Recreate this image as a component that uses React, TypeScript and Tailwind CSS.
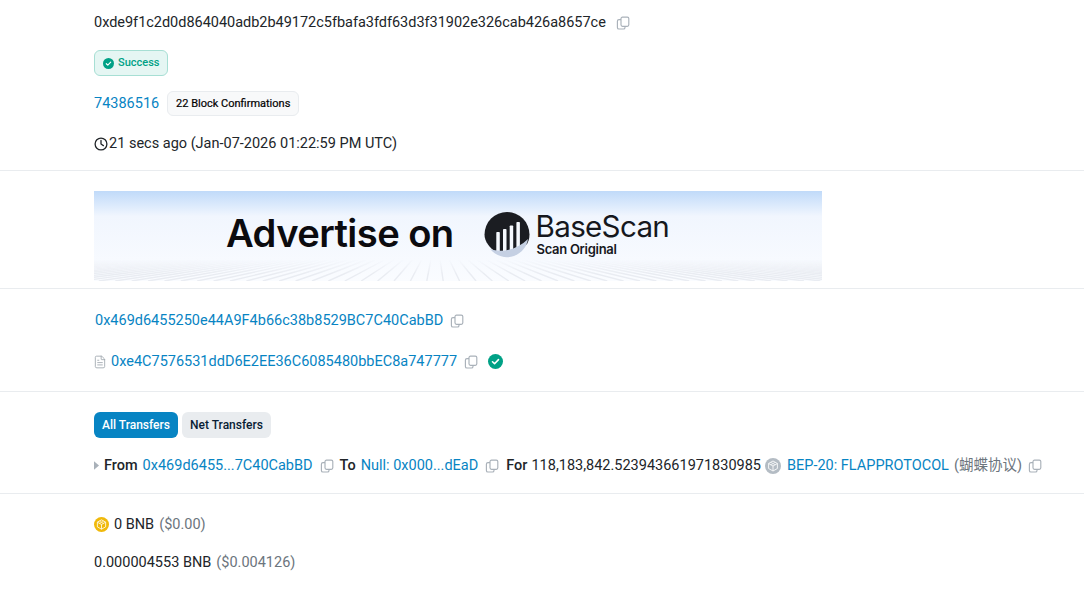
import React from "react";
import { FileText } from "lucide-react";

function CopyIcon({ className = "" }: { className?: string }) {
  return (
    <svg viewBox="0 0 14 14" className={"w-[14px] h-[14px] shrink-0 " + className} fill="none" stroke="#a9b1b9" strokeWidth="1.15">
      <rect x="5" y="1.1" width="7.8" height="9.2" rx="1.5" />
      <path d="M5 3.6H3A1.6 1.6 0 0 0 1.4 5.2v6.2A1.6 1.6 0 0 0 3 13h4.4A1.6 1.6 0 0 0 9 11.4v-1" />
    </svg>
  );
}

function CheckCircle({ size }: { size: number }) {
  return (
    <svg viewBox="0 0 16 16" width={size} height={size} className="shrink-0">
      <circle cx="8" cy="8" r="8" fill="#00a186" />
      <path d="M4.8 8.3l2.2 2.1 4.2-4.4" fill="none" stroke="#fff" strokeWidth="1.7" strokeLinecap="round" strokeLinejoin="round" />
    </svg>
  );
}

function Coin({ fill, size }: { fill: string; size: number }) {
  return (
    <svg viewBox="0 0 16 16" width={size} height={size} className="shrink-0">
      <circle cx="8" cy="8" r="8" fill={fill} />
      <g fill="none" stroke="#fff" strokeWidth="1" strokeOpacity="0.85" strokeLinejoin="round">
        <path d="M8 3l4.4 2.5v5L8 13l-4.4-2.5v-5z" />
        <path d="M3.6 5.5L8 8l4.4-2.5M8 8v5" />
        <path d="M5.8 4.3L10.2 6.8M10.2 4.3L5.8 6.8" strokeWidth="0.7" />
      </g>
    </svg>
  );
}

function AdLines() {
  const lines = [];
  for (let i = 0; i <= 110; i++) {
    const xb = -520 + i * 16.4;
    const xt = 364 + (i - 55) * 9;
    lines.push(<line key={i} x1={xt} y1="68" x2={xb} y2="90" stroke="#e9ecf2" strokeWidth="1.4" />);
  }
  return (
    <svg viewBox="0 0 728 90" className="absolute inset-0 w-full h-full">
      <defs>
        <linearGradient id="fade" x1="0" y1="0" x2="0" y2="1">
          <stop offset="0.76" stopColor="#fff" stopOpacity="0" />
          <stop offset="0.92" stopColor="#fff" stopOpacity="1" />
        </linearGradient>
        <mask id="m">
          <rect width="728" height="90" fill="url(#fade)" />
        </mask>
      </defs>
      <g mask="url(#m)">{lines}</g>
    </svg>
  );
}

function Logo() {
  return (
    <svg viewBox="0 0 46 46" width="46" height="46" className="shrink-0">
      <path d="M0.5 22.5A22.5 22.5 0 0 1 45.5 22.5C45.5 27 44 31 42 33 34 38 24 40 12 40 6 36 0.5 30 0.5 22.5z" fill="#1b1d22" />
      <g fill="#f6f9fe">
        <rect x="12.3" y="20" width="3.5" height="22" rx="0.8" />
        <rect x="19" y="17" width="3.5" height="24" rx="0.8" />
        <rect x="25.7" y="13.5" width="3.5" height="26" rx="0.8" />
        <rect x="32.4" y="10" width="3.5" height="27" rx="0.8" />
      </g>
      <path d="M6 37C18 41 33 38 44 27 43 34 38 41 30 44 21 47 12 44 6 37z" fill="#c5d0e3" />
    </svg>
  );
}

export default function App() {
  return (
    <div className="w-[1084px] h-[594px] overflow-hidden bg-white text-[14.5px] leading-[21px] text-[#212529] font-['Roboto','Noto_Sans_CJK_SC',sans-serif]">
      <section className="h-[171px] border-b border-[#e9ecef] pl-[94px] pt-[12px] flex flex-col items-start">
        <div className="flex items-center h-[21px] tracking-[-0.02px]">
          <span>0xde9f1c2d0d864040adb2b49172c5fbafa3fdf63d3f31902e326cab426a8657ce</span>
          <CopyIcon className="ml-[10px]" />
        </div>
        <div className="mt-[17px] h-[26px] w-[74px] rounded-[6px] border border-[#a7dfd4] bg-[#e5f6f3] text-[#00a186] text-[11px] font-medium flex items-center pl-[8px] gap-[4px]">
          <CheckCircle size={11} />
          <span className="-mt-[1px]">Success</span>
        </div>
        <div className="mt-[15px] flex items-center h-[25px]">
          <span className="text-[#0784c3]">74386516</span>
          <span className="ml-[8px] h-[25px] w-[132px] rounded-[6px] border border-[#e9ecef] bg-[#f8f9fa] text-[11px] font-normal [-webkit-text-stroke:0.2px_#000] text-[#000] flex items-center justify-center">22 Block Confirmations</span>
        </div>
        <div className="mt-[17px] flex items-center h-[21px] gap-[1px]">
          <svg viewBox="0 0 14 14" width="14" height="14" className="shrink-0" fill="none" stroke="#212529" strokeWidth="1.3" strokeLinecap="round" strokeLinejoin="round">
            <circle cx="7" cy="7" r="5.9" />
            <path d="M7 3.4V7l2.4 1.6" />
          </svg>
          <span>21 secs ago (Jan-07-2026 01:22:59 PM UTC)</span>
        </div>
      </section>

      <section className="h-[118px] border-b border-[#e9ecef] pl-[94px] pt-[20px]">
        <div className="relative w-[728px] h-[90px] overflow-hidden bg-gradient-to-b from-[#c0daf9] via-[#f1f6fe] via-[28%] to-[#fafcff] flex items-center">
          <AdLines />
          <span className="relative ml-[132px] -mt-[6px] text-[38.2px] leading-none font-semibold text-[#0b0b0f] font-['Inter',sans-serif] tracking-[-0.6px] whitespace-nowrap">Advertise on</span>
          <div className="relative ml-[30px] flex items-center gap-[6px] -mt-[2px]">
            <Logo />
            <div className="flex flex-col font-['Inter',sans-serif] text-[#16181d] -mt-[2px]">
              <span className="text-[29.6px] leading-[29px] tracking-[-0.7px]">BaseScan</span>
              <span className="mt-[1px] ml-[1px] text-[13px] leading-[14px] font-semibold tracking-[-0.3px]">Scan Original</span>
            </div>
          </div>
        </div>
      </section>

      <section className="h-[103px] border-b border-[#e9ecef] pl-[95px] pt-[21px]">
        <div className="flex items-center h-[21px] text-[#0784c3]">
          <span>0x469d6455250e44A9F4b66c38b8529BC7C40CabBD</span>
          <CopyIcon className="ml-[7px]" />
        </div>
        <div className="flex items-center h-[21px] mt-[20px] -ml-[1px] text-[#0784c3]">
          <FileText size={14} strokeWidth={1.4} color="#9aa3ab" className="-ml-[1px] mr-[4px]" />
          <span>0xe4C7576531ddD6E2EE36C6085480bbEC8a747777</span>
          <CopyIcon className="ml-[7px]" />
          <span className="ml-[10px]"><CheckCircle size={15} /></span>
        </div>
      </section>

      <section className="h-[102px] border-b border-[#e9ecef] pl-[94px] pt-[20px]">
        <div className="flex gap-[4px] text-[12px] font-medium">
          <span className="h-[26px] w-[84px] rounded-[6px] bg-[#0784c3] text-white flex items-center justify-center">All Transfers</span>
          <span className="h-[26px] w-[89px] rounded-[6px] bg-[#e9ecef] text-[#081d35] flex items-center justify-center">Net Transfers</span>
        </div>
        <div className="flex items-center h-[21px] mt-[17px] whitespace-nowrap">
          <svg viewBox="0 0 6 10" width="5" height="9" className="shrink-0 mr-[5px]"><path d="M0 0l6 5-6 5z" fill="#a9b1b9" /></svg>
          <span className="font-medium">From</span>
          <span className="ml-[5px] text-[#0784c3]">0x469d6455...7C40CabBD</span>
          <CopyIcon className="ml-[7px]" />
          <span className="ml-[6px] font-medium">To</span>
          <span className="ml-[5px] text-[#0784c3]">Null: 0x000...dEaD</span>
          <CopyIcon className="ml-[7px]" />
          <span className="ml-[7px] font-medium">For</span>
          <span className="ml-[4px]">118,183,842.523943661971830985</span>
          <span className="ml-[4px]"><Coin fill="#b4bcc4" size={16} /></span>
          <span className="ml-[6px] text-[#0784c3]">BEP-20: FLAPPROTOCOL</span>
          <span className="ml-[5px] text-[#6c757d]">(蝴蝶协议)</span>
          <CopyIcon className="ml-[6px]" />
        </div>
      </section>

      <section className="pl-[94px] pt-[20px]">
        <div className="flex items-center h-[21px]">
          <Coin fill="#f0b90b" size={15} />
          <span className="ml-[5px]">0 BNB</span>
          <span className="ml-[5px] text-[#6c757d]">($0.00)</span>
        </div>
        <div className="flex items-center h-[21px] mt-[17px]">
          <span>0.000004553 BNB</span>
          <span className="ml-[5px] text-[#6c757d]">($0.004126)</span>
        </div>
      </section>
    </div>
  );
}
